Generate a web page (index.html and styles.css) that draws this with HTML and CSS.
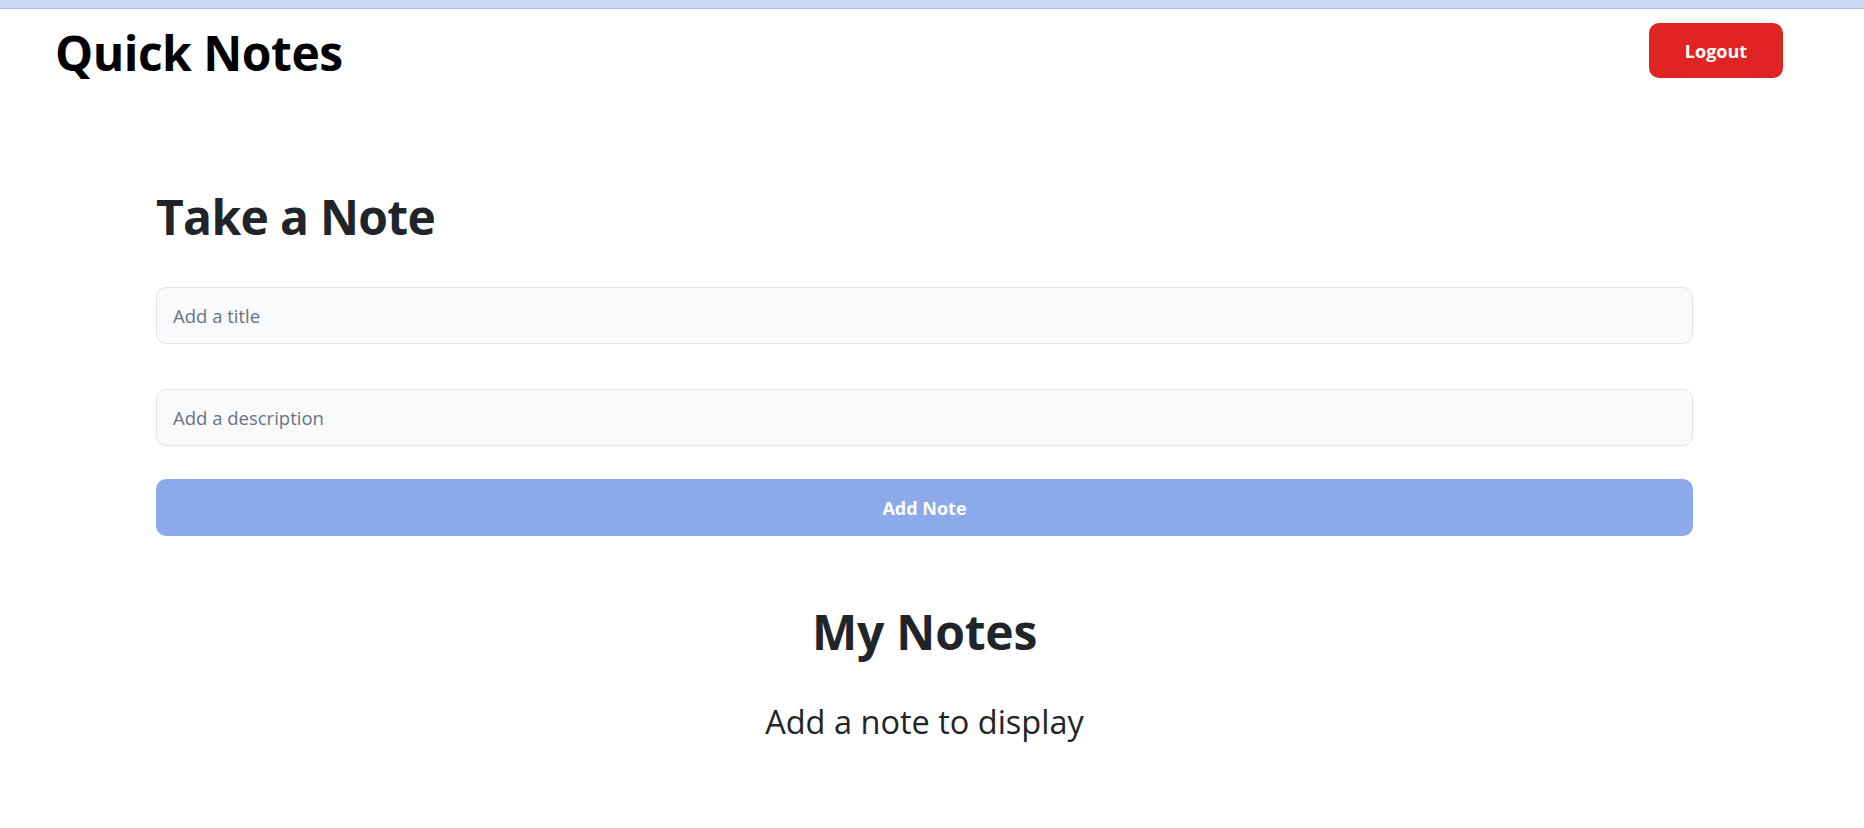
FILE: index.html
```html
<!DOCTYPE html>
<html lang="en">
<head>
<meta charset="utf-8">
<title>Quick Notes</title>
<link rel="stylesheet" href="styles.css">
</head>
<body>
<div class="topstrip"></div>
<header class="header">
  <h1 class="brand">Quick Notes</h1>
  <button class="logout" type="button">Logout</button>
</header>
<main class="container">
  <h2 class="section-title">Take a Note</h2>
  <form class="note-form">
    <input class="field" type="text" placeholder="Add a title">
    <input class="field field-desc" type="text" placeholder="Add a description">
    <button class="add-btn" type="button">Add Note</button>
  </form>
  <h2 class="section-title center">My Notes</h2>
  <p class="empty">Add a note to display</p>
</main>
</body>
</html>
```

FILE: styles.css
```css
* { box-sizing: border-box; }
html, body { margin: 0; padding: 0; background: #fff; }
body {
  font-family: "Open Sans", "Noto Sans", sans-serif;
  color: #212529;
}
.topstrip {
  height: 9px;
  background: #c9dbf4;
  border-bottom: 1px solid #a3bbe0;
}
.header {
  display: flex;
  align-items: flex-start;
  justify-content: space-between;
  padding: 0 81px 0 55px;
  height: 120px;
}
.brand {
  margin: 12px 0 0;
  font-size: 48px;
  font-weight: 700;
  color: #000;
  line-height: 64px;
  letter-spacing: -0.5px;
}
.logout {
  margin-top: 14px;
  width: 134px;
  height: 55px;
  border: none;
  border-radius: 10px;
  background: #e02424;
  color: #fff;
  font-family: inherit;
  font-size: 18px;
  font-weight: 700;
}
.container {
  margin-left: 156px;
  width: 1537px;
}
.section-title {
  margin: 56px 0 0;
  font-size: 48px;
  font-weight: 700;
  line-height: 64px;
  letter-spacing: -0.7px;
}
.section-title.center { text-align: center; margin-top: 64px; letter-spacing: -0.2px; }
.note-form {
  display: flex;
  flex-direction: column;
  margin-top: 38px;
}
.field {
  height: 57px;
  padding: 0 16px;
  background: #f9fafb;
  border: 1px solid #e2e4e8;
  border-radius: 10px;
  font-family: inherit;
  font-size: 18.5px;
  color: #111827;
}
.field::placeholder { color: #6b7280; }
.field-desc { margin-top: 45px; }
.add-btn {
  margin-top: 33px;
  height: 57px;
  border: none;
  border-radius: 10px;
  background: #8ca9ec;
  color: #fff;
  font-family: inherit;
  font-size: 18px;
  font-weight: 700;
}
.empty {
  margin: 36px 0 0;
  text-align: center;
  font-size: 32.5px;
  line-height: 44px;
}
```
